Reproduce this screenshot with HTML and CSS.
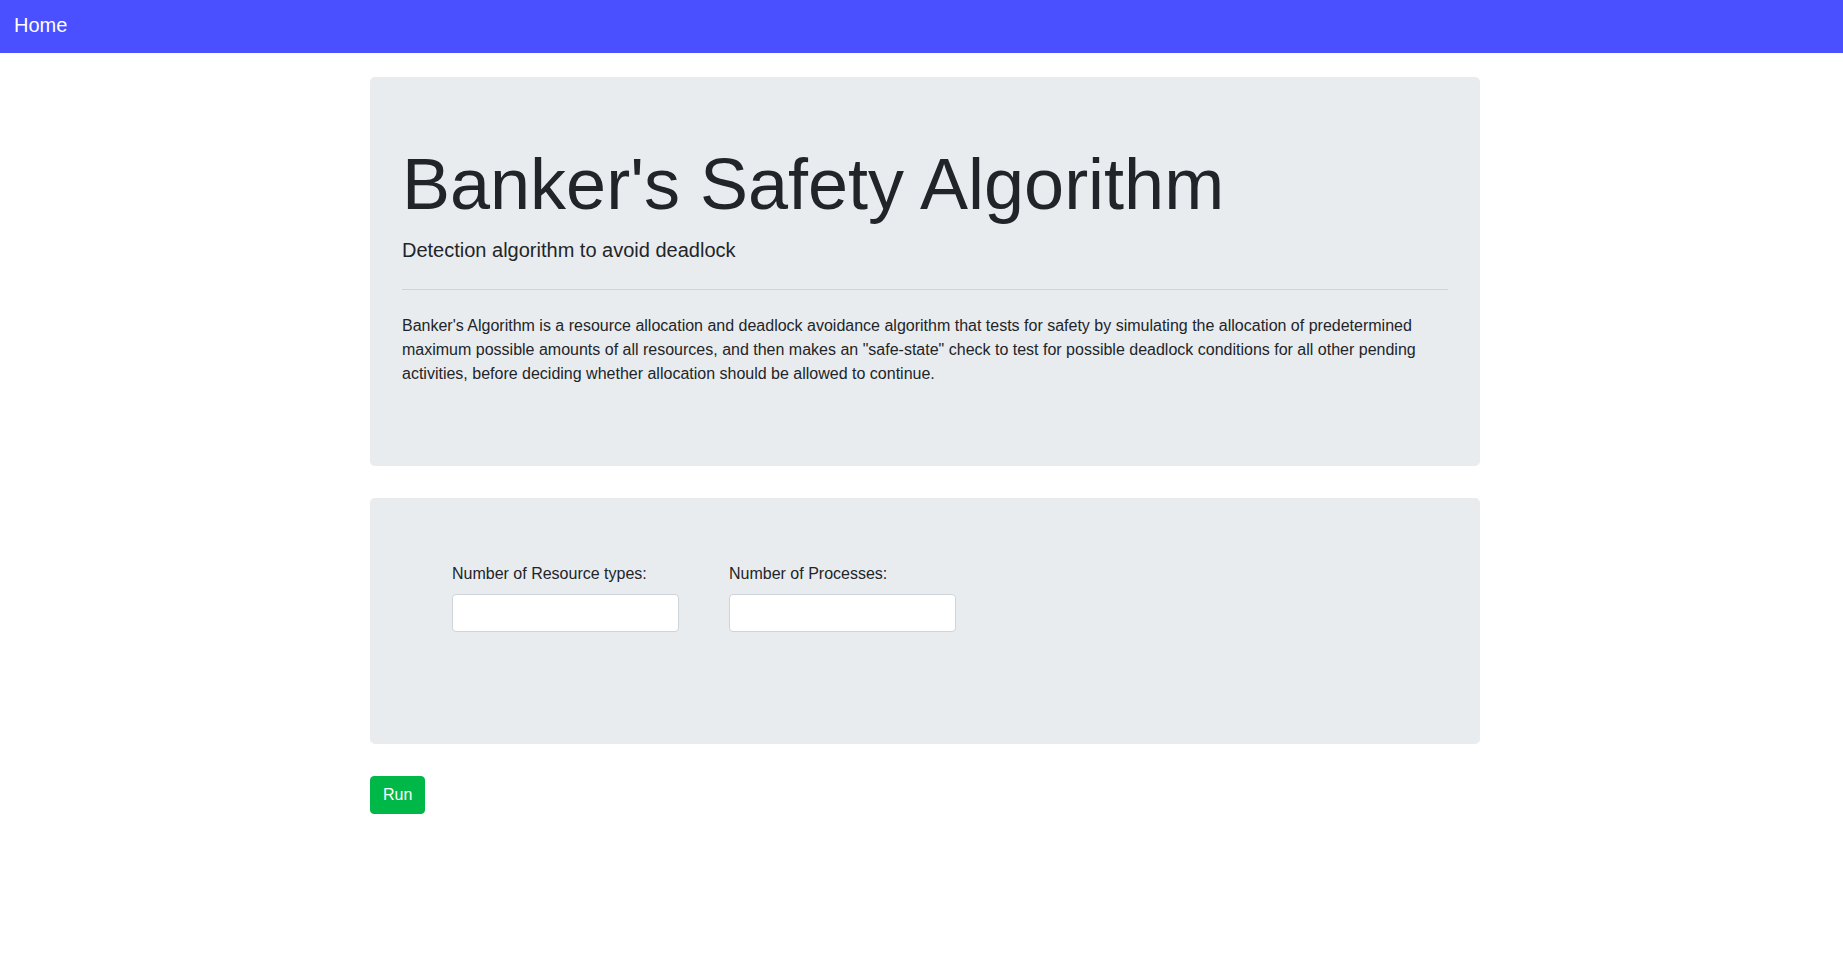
FILE: index.html
```html
<!DOCTYPE html>
<html lang="en">
<head>
<meta charset="utf-8">
<title>Banker's Safety Algorithm</title>
<link rel="stylesheet" href="styles.css">
</head>
<body>
<nav class="navbar">
  <a class="brand" href="#">Home</a>
</nav>
<main class="container">
  <section class="jumbotron">
    <h1 class="display">Banker's Safety Algorithm</h1>
    <p class="lead">Detection algorithm to avoid deadlock</p>
    <hr class="divider">
    <p class="text">Banker's Algorithm is a resource allocation and deadlock avoidance algorithm that tests for safety by simulating the allocation of predetermined maximum possible amounts of all resources, and then makes an "safe-state" check to test for possible deadlock conditions for all other pending activities, before deciding whether allocation should be allowed to continue.</p>
  </section>
  <section class="jumbotron form-box">
    <div class="fields">
      <div class="field">
        <label class="label" for="res">Number of Resource types:</label>
        <input class="input" id="res" type="text">
      </div>
      <div class="field">
        <label class="label" for="proc">Number of Processes:</label>
        <input class="input" id="proc" type="text">
      </div>
    </div>
  </section>
  <button class="btn-run" type="button">Run</button>
</main>
</body>
</html>
```

FILE: styles.css
```css
* { box-sizing: border-box; }

html, body {
  margin: 0;
  padding: 0;
}

body {
  font-family: "Liberation Sans", Arial, sans-serif;
  font-size: 16px;
  line-height: 1.5;
  color: #212529;
  background: #ffffff;
}

.navbar {
  height: 53px;
  background: #4a50ff;
  padding: 10px 14px 13px;
  display: flex;
  align-items: flex-start;
}

.brand {
  font-size: 20px;
  line-height: 30px;
  color: #ffffff;
  text-decoration: none;
}

.container {
  width: 1110px;
  margin: 24px auto 0;
  position: relative;
  left: 3.5px;
}

.jumbotron {
  background: #e9ecef;
  border-radius: 4.8px;
  padding: 64px 32px;
  margin-bottom: 32px;
}

.display {
  font-size: 72px;
  font-weight: 400;
  line-height: 1.2;
  margin: 0 0 8px;
}

.lead {
  font-size: 20px;
  line-height: 30px;
  margin: 0;
}

.divider {
  border: 0;
  border-top: 1px solid rgba(0, 0, 0, 0.1);
  margin: 24px 0;
  height: 0;
}

.text {
  margin: 0 0 16px;
  font-size: 16px;
  line-height: 24px;
}

.form-box {
  padding-bottom: 112px;
}

.fields {
  display: flex;
  gap: 50px;
  padding-left: 50px;
}

.field {
  display: flex;
  flex-direction: column;
  width: 227px;
}

.label {
  font-size: 16px;
  line-height: 24px;
  margin-bottom: 8px;
}

.input {
  height: 38px;
  width: 100%;
  border: 1px solid #ced4da;
  border-radius: 4px;
  background: #ffffff;
  padding: 6px 12px;
  font-family: inherit;
  font-size: 16px;
}

.btn-run {
  display: inline-block;
  background: #00b847;
  color: #ffffff;
  border: 1px solid #00b847;
  border-radius: 4px;
  padding: 6px 12px;
  font-family: inherit;
  font-size: 16px;
  line-height: 24px;
  cursor: pointer;
}
```
